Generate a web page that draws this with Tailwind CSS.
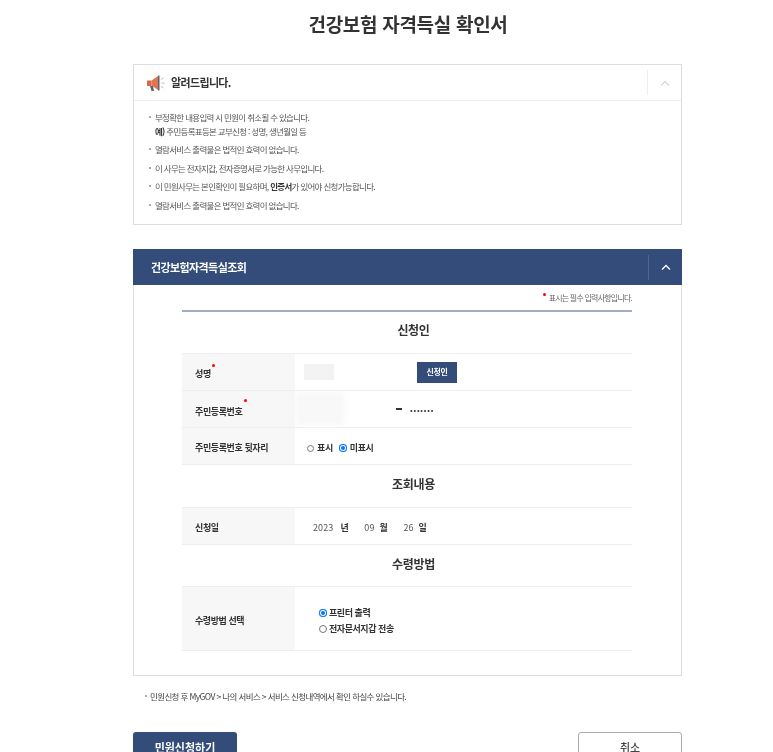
<!DOCTYPE html>
<html lang="ko">
<head>
    <meta charset="UTF-8">
    <meta name="viewport" content="width=device-width, initial-scale=1.0">
    <title>건강보험 자격득실 확인서</title>
    <script src="https://cdn.jsdelivr.net/npm/@tailwindcss/browser@4"></script>
</head>
<body class="bg-white h-[752px] overflow-hidden font-['Noto_Sans_CJK_KR','Noto_Sans',sans-serif] text-[#333]">
    <main class="ml-[133px] w-[549px] h-[752px] blur-[0.35px]">
        <!-- Title -->
        <h1 class="h-[64px] pt-[9px] text-center text-[19px] leading-[30px] font-bold text-[#333] tracking-[-0.3px] pl-[1px]">건강보험 자격득실 확인서</h1>

        <!-- Notice -->
        <section class="h-[161px] border border-[#ddd]">
            <div class="h-[36px] flex items-center justify-between border-b border-[#eee] pl-[12px]">
                <div class="flex items-center gap-[6px]">
                    <svg width="19" height="18" viewBox="0 0 19 18">
                        <path d="M1 6.500h4.500v5.500H1z" fill="#d9694a"/>
                        <path d="M5.500 6.500 12 2v14l-6.500-4.500z" fill="#e2744f"/>
                        <path d="M12 1.500h1.500v15H12z" fill="#5b6472"/>
                        <path d="M4 12h3l1 5H5.500z" fill="#5b6472"/>
                        <path d="M15 5.500l2.500-1.500M15.500 9H18.500M15 12.500l2.500 1.500" stroke="#b9bec6" stroke-width="1" fill="none"/>
                    </svg>
                    <span class="text-[11px] font-bold tracking-[-0.65px] text-[#333]">알려드립니다.</span>
                </div>
                <div class="h-[25px] w-[34px] border-l border-[#eee] flex items-center justify-center">
                    <svg width="10" height="6" viewBox="0 0 10 6" fill="none"><path d="M1 5.500 5 1.500l4 4" stroke="#bbb" stroke-width="1"/></svg>
                </div>
            </div>
            <ul class="pl-[15px] pt-[9px] text-[8.500px] leading-[14px] tracking-[-0.7px] text-[#555]">
                <li class="flex mb-[4.400px]"><span class="w-[2px] h-[2px] mt-[6px] mr-[4px] bg-[#aaa]"></span><div>부정확한 내용입력 시 민원이 취소될 수 있습니다.<br><b class="text-[#333]">예)</b> 주민등록표등본 교부신청 : 성명, 생년월일 등</div></li>
                <li class="flex mb-[4.400px]"><span class="w-[2px] h-[2px] mt-[6px] mr-[4px] bg-[#aaa]"></span><div>열람서비스 출력물은 법적인 효력이 없습니다.</div></li>
                <li class="flex mb-[4.400px]"><span class="w-[2px] h-[2px] mt-[6px] mr-[4px] bg-[#aaa]"></span><div>이 사무는 전자지갑, 전자증명서로 가능한 사무입니다.</div></li>
                <li class="flex mb-[4.400px]"><span class="w-[2px] h-[2px] mt-[6px] mr-[4px] bg-[#aaa]"></span><div>이 민원사무는 본인확인이 필요하며, <b class="text-[#333]">인증서</b>가 있어야 신청가능합니다.</div></li>
                <li class="flex"><span class="w-[2px] h-[2px] mt-[6px] mr-[4px] bg-[#aaa]"></span><div>열람서비스 출력물은 법적인 효력이 없습니다.</div></li>
            </ul>
        </section>

        <!-- Form panel -->
        <section class="mt-[24px] h-[427px] border-x border-b border-[#ddd]">
            <div class="-mx-px h-[36px] bg-[#334c79] flex items-center justify-between pl-[18px]">
                <span class="text-[11px] font-bold tracking-[-0.6px] text-white">건강보험자격득실조회</span>
                <div class="h-[25px] w-[34px] border-l border-[#52668f] flex items-center justify-center">
                    <svg width="10" height="6" viewBox="0 0 10 6" fill="none"><path d="M1 5.500 5 1.500l4 4" stroke="#fff" stroke-width="1.300"/></svg>
                </div>
            </div>

            <div class="ml-[48px] mr-[49px]">
                <p class="h-[25px] flex justify-end items-center text-[8px] tracking-[-0.78px] text-[#666]">
                    <span class="relative -top-[3px] mr-[3px] w-[3px] h-[3px] rounded-full bg-[#f00]"></span>표시는 필수 입력사항입니다.
                </p>
                <div class="border-t-2 border-[#a3adc2]">
                    <h2 class="h-[41px] pb-[6px] pl-[13px] flex items-center justify-center text-[12px] font-bold tracking-[-0.3px] text-[#333]">신청인</h2>

                    <div class="grid grid-cols-[113px_1fr] h-[38px] border-y border-[#eee] text-[9px] font-bold tracking-[-0.4px]">
                        <div class="bg-[#f7f7f7] flex items-center pl-[13px] pt-[4px]"><span class="relative">성명<i class="absolute -top-[3px] left-[17px] w-[3px] h-[3px] rounded-full bg-[#f00]"></i></span></div>
                        <div class="flex items-center pl-[9px]">
                            <span class="w-[30px] h-[16px] bg-[#f3f3f3]"></span>
                            <span class="ml-[83px] w-[40px] h-[21px] bg-[#334c79] text-white text-[8px] flex items-center justify-center">신청인</span>
                        </div>
                    </div>
                    <div class="grid grid-cols-[113px_1fr] h-[37px] border-b border-[#eee] text-[9px] font-bold tracking-[-0.4px]">
                        <div class="bg-[#f7f7f7] flex items-center pl-[13px] pt-[6px]"><span class="relative">주민등록번호<i class="absolute -top-[6px] left-[49px] w-[3px] h-[3px] rounded-full bg-[#f00]"></i></span></div>
                        <div class="flex items-center">
                            <span class="w-[50px] h-[34px] bg-[#f8f8f8] blur-[3px]"></span>
                            <span class="ml-[51px] w-[6px] h-[1.500px] bg-[#333]"></span>
                            <span class="ml-[8px] pt-[3px] text-[7px] tracking-[0.8px] text-[#444]">•••••••</span>
                        </div>
                    </div>
                    <div class="grid grid-cols-[113px_1fr] h-[37px] pt-[4px] bg-[linear-gradient(90deg,#f7f7f7_113px,#fff_113px)] border-b border-[#eee] text-[9px] font-bold tracking-[-0.4px]">
                        <div class="flex items-center pl-[13px]">주민등록번호 뒷자리</div>
                        <div class="flex items-center pl-[12px]">
                            <span class="w-[7px] h-[7px] rounded-full border border-[#777] bg-white"></span>
                            <span class="ml-[3px]">표시</span>
                            <span class="ml-[6px] w-[8px] h-[8px] rounded-full bg-[#0075ff] shadow-[inset_0_0_0_1px_#0075ff,inset_0_0_0_2px_#fff]"></span>
                            <span class="ml-[3px]">미표시</span>
                        </div>
                    </div>

                    <h2 class="h-[42px] pb-[5px] pl-[13px] flex items-center justify-center text-[12px] font-bold tracking-[-0.3px] text-[#333]">조회내용</h2>
                    <div class="grid grid-cols-[113px_1fr] h-[38px] pt-[3px] bg-[linear-gradient(90deg,#f7f7f7_113px,#fff_113px)] border-y border-[#eee] text-[9px] font-bold tracking-[-0.4px]">
                        <div class="flex items-center pl-[13px]">신청일</div>
                        <div class="flex items-center pl-[18px]">
                            <span class="font-normal text-[#555] tracking-[0.1px]">2023</span><span class="ml-[7px]">년</span>
                            <span class="ml-[16px] font-normal text-[#555] tracking-[0.1px]">09</span><span class="ml-[5px]">월</span>
                            <span class="ml-[16px] font-normal text-[#555] tracking-[0.1px]">26</span><span class="ml-[5px]">일</span>
                        </div>
                    </div>

                    <h2 class="h-[41px] pb-[4px] pl-[13px] flex items-center justify-center text-[12px] font-bold tracking-[-0.3px] text-[#333]">수령방법</h2>
                    <div class="grid grid-cols-[113px_1fr] h-[65px] pt-[5px] bg-[linear-gradient(90deg,#f7f7f7_113px,#fff_113px)] border-y border-[#eee] text-[9px] font-bold tracking-[-0.45px]">
                        <div class="flex items-center pl-[13px]">수령방법 선택</div>
                        <div class="flex flex-col justify-center gap-[4px] pl-[24px] leading-[12px]">
                            <div class="flex items-center">
                                <span class="w-[8px] h-[8px] rounded-full bg-[#0075ff] shadow-[inset_0_0_0_1px_#0075ff,inset_0_0_0_2px_#fff]"></span>
                                <span class="ml-[2px]">프린터 출력</span>
                            </div>
                            <div class="flex items-center">
                                <span class="w-[8px] h-[8px] rounded-full border border-[#777] bg-white"></span>
                                <span class="ml-[2px]">전자문서지갑 전송</span>
                            </div>
                        </div>
                    </div>
                </div>
            </div>
        </section>

        <!-- Footnote -->
        <p class="mt-[13px] pl-[12px] h-[14px] flex items-center text-[8.500px] tracking-[-0.62px] text-[#444]">
            <span class="w-[2px] h-[2px] mr-[3px] bg-[#aaa]"></span>민원신청 후 MyGOV &gt; 나의 서비스 &gt; 서비스 신청내역에서 확인 하실수 있습니다.
        </p>

        <!-- Buttons -->
        <div class="mt-[29px] flex justify-between">
            <a class="w-[104px] h-[40px] pb-[10px] rounded-t-[3px] bg-[#334c79] text-white text-[11px] font-bold flex items-center justify-center">민원신청하기</a>
            <a class="w-[104px] h-[40px] pb-[10px] rounded-t-[3px] border border-[#aaa] bg-white text-[11px] font-medium text-[#444] flex items-center justify-center">취소</a>
        </div>
    </main>
</body>
</html>
